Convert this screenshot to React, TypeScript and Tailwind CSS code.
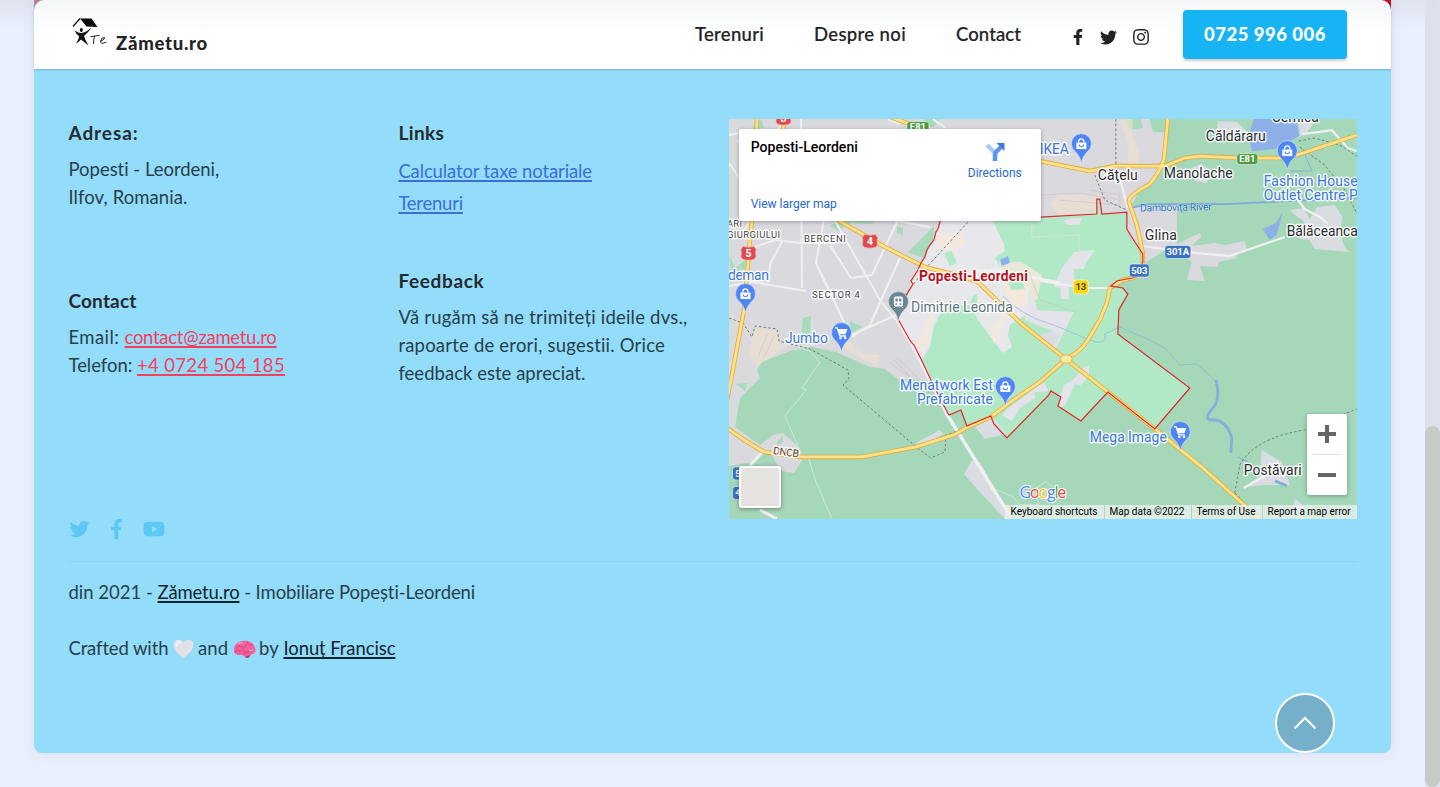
import { useLayoutEffect, useRef } from "react";
import type { ReactNode } from "react";
import { FaFacebookF, FaTwitter, FaInstagram, FaYoutube } from "react-icons/fa";

/* A run of text whose tracking is computed so that it fills `w` pixels. */
function Run({ w, className = "", children }: { w: number; className?: string; children: string }) {
  const ref = useRef<HTMLSpanElement>(null);
  useLayoutEffect(() => {
    const el = ref.current;
    if (!el) return;
    el.style.letterSpacing = "0px";
    const natural = el.getBoundingClientRect().width;
    el.style.letterSpacing = `${(w - natural) / children.length}px`;
  }, [w, children]);
  return (
    <span ref={ref} className={`inline-block whitespace-pre ${className}`}>
      {children}
    </span>
  );
}

type LabelProps = { x: number; y: number; w: number; size?: number; fill?: string; bold?: boolean; halo?: number; children: string };
function Label({ x, y, w, size = 14, fill = "#2c2c2f", bold = false, halo = 3, children }: LabelProps) {
  return (
    <text
      x={x}
      y={y}
      textLength={w}
      fontSize={size}
      fontWeight={bold ? 700 : 400}
      fill={fill}
      stroke="#fff"
      strokeOpacity={0.85}
      strokeWidth={halo}
      strokeLinejoin="round"
      paintOrder="stroke"
    >
      {children}
    </text>
  );
}

function Pin({ x, y, kind }: { x: number; y: number; kind: "bag" | "cart" | "train" }) {
  return (
    <g transform={`translate(${x} ${y})`}>
      <path
        d="M0 18.5C-1.5 13-3.500 10-6.500 7.200A10 10 0 1 1 6.500 7.200C3.500 10 1.500 13 0 18.500Z"
        fill={kind === "train" ? "#6b8791" : "#4f86f3"}
        stroke="#dfe8f5"
        strokeWidth={0.6}
      />
      {kind === "bag" && (
        <g>
          <path d="M-5-1.500H5V5H-5Z" fill="#fff" />
          <path d="M-2.600-1.500V-2.500A2.600 2.600 0 0 1 2.600-2.500V-1.500" fill="none" stroke="#fff" strokeWidth={1.300} />
          <path d="M-2.200 0.500A2.200 2.200 0 0 0 2.200 0.500" fill="none" stroke="#4f86f3" strokeWidth={1.100} />
        </g>
      )}
      {kind === "cart" && (
        <g>
          <path d="M-3.700-4H6L4 1.300H-2Z" fill="#fff" />
          <path d="M-6.500-5.200H-4.300L-1.500 3H4.500" fill="none" stroke="#fff" strokeWidth={1.300} />
          <circle cx={-1} cy={5} r={1.200} fill="#fff" />
          <circle cx={3.800} cy={5} r={1.200} fill="#fff" />
        </g>
      )}
      {kind === "train" && (
        <g>
          <rect x={-4.500} y={-5.500} width={9} height={10} rx={1.800} fill="#fff" />
          <path d="M-3-3.500H-0.600V-0.500H-3ZM0.600-3.500H3V-0.500H0.600ZM-3 1.200H-1.200V2.800H-3ZM1.200 1.200H3V2.800H1.200Z" fill="#6b8791" />
          <path d="M-3 4.500L-4.500 6M3 4.500L4.500 6" stroke="#fff" />
        </g>
      )}
    </g>
  );
}

function Shield({ x, y, w, h = 13, fill, color = "#fff", text }: { x: number; y: number; w: number; h?: number; fill: string; color?: string; text: string }) {
  return (
    <g>
      <rect x={x - w / 2} y={y - h / 2} width={w} height={h} rx={3} fill={fill} stroke="#fff" strokeOpacity={0.7} strokeWidth={0.8} />
      <text x={x} y={y + 3.400} fontSize={9.500} fontWeight={700} textAnchor="middle" fill={color}>
        {text}
      </text>
    </g>
  );
}

/* National road marker: a red shield with notched upper corners. */
function RoadShield({ x, y, text }: { x: number; y: number; text: string }) {
  return (
    <g transform={`translate(${x} ${y})`}>
      <path d="M-5.500-6.500Q0-5 5.500-6.500L7.500-3.500Q6.500 0 7.500 3Q7.500 7 0 7Q-7.500 7-7.500 3Q-6.500 0-7.500-3.500Z" fill="#e2484c" stroke="#e9a9ae" strokeWidth={0.6} />
      <text y={4} fontSize={10.500} fontWeight={700} textAnchor="middle" fill="#fff">
        {text}
      </text>
    </g>
  );
}

const BORDER =
  "M941 219L938 229L936 232L934 240L930 245L927 250L925 257L921 263L918 270L911 281L913 284L906 296L898 319L911 342L914 345L921 359L932 382L942 402L949 415L961 410L967 426L991 416L994 424L1007 438L1049 395L1051 391L1061 397L1058 406L1081 421L1108 392L1155 429L1190 388L1118 334L1119 310L1128 294L1123 288L1111 286L1117 281L1137 277L1143 262L1143 254L1135 242L1127 229L1127 212L1102 214L1100 199L1097 199L1097 214L1040 217Z";

const HIGHWAYS = [
  "M757 119L753 210L750 240L744 310L731 380L727 400",
  "M784 119L783 132",
  "M836 219L885 247L925 267L960 276L978 282L1009 312L1023 325L1066 359L1108 392L1155 429L1203 468L1260 519",
  "M727 428L744 440L764 452L800 457H862L916 447L954 435L968 427L991 417L1012 401L1040 382L1066 359Q1081 352 1088 340L1100 320L1107 303L1110 288L1123 280L1137 277",
  "M1143 270V254L1137 225L1129 202Q1128 196 1150 184Q1160 172 1164 160L1168 119",
  "M1030 159L1075 168L1090 171L1115 166H1165L1185 158L1200 156L1240 158H1285L1300 154L1357 135",
  "M885 115L910 124",
];

function MapDrawing() {
  return (
    <svg className="block h-full w-full" viewBox="729 119 628 400" fontFamily="Roboto, sans-serif">
      <rect x={729} y={119} width={628} height={400} fill="#a5d7b9" />
      <path
        d="M729 119H1150L1153 132H1165L1163 165L1155 180L1140 190L1131 206H1177V244L1200 233L1202 236L1192 246L1215 243L1225 245L1245 241L1247 250L1236 254L1237 258L1219 262L1218 267L1200 266L1205 281L1187 280L1192 262L1182 255L1165 250L1150 260L1143 264L1110 280L950 411L925 380L898 379L885 369L870 367L836 352L812 347L790 351L762 362L757 370L760 378L740 398L735 427L760 445L773 435L783 433L800 448L802 460L794 473L781 471L770 452H762L752 462L729 466Z"
        fill="#dadade"
      />
      <g fill="#a9dabc">
        <path d="M755 119L762 121L764 128L753 129ZM925 119H940L934 127H921ZM1125 119H1141L1143 128L1128 130ZM908 252L934 226V247L925 259ZM803 318L811 316L810 342L800 346ZM850 321L863 327L849 334ZM729 256L736 268L746 259V269L731 272ZM830 226L842 219H875L872 224L850 223L838 231ZM736 384L747 383L745 391Z" />
        <path d="M777 442L783 436V441L777 448ZM897 226L903 228V235L897 233Z" />
      </g>
      <path d="M749 353L754 328L778 330V340L792 343L763 362L757 365ZM838 346L845 337L865 355H880L876 365ZM1050 203L1060 195H1100L1102 209L1080 226L1065 225ZM1120 119H1133L1132 135L1140 152L1138 168L1128 164L1129 145Z" fill="#ecdfce" opacity={0.7} />

      <path d={BORDER} fill="#b1e9c6" />
      <path
        d="M941 219H992L1004 244L1005 251L995 258L1003 272L1030 288L1033 310L1010 325L1008 335L1012 347L1003 353L978 320L970 305L945 306L934 326L930 347L922 360L898 319L912 282L931 245Z"
        fill="#e8e7ec"
      />
      <path d="M999 262H1022L1042 275L1038 299L1010 310L994 345L990 328L1010 305L1003 286ZM934 233L962 235L967 245L952 250L938 249Z M936 307L930 337L923 352L915 344Z" fill="#f5e9d9" opacity={0.8} />
      <path d="M1062 268L1074 252L1095 250L1086 263L1084 269H1074L1075 285H1069V299H1061V288L1054 287ZM1030 288L1038 310L1074 312L1055 350L1044 344L1053 331L1025 320ZM1084 367L1089 366V375L1081 385L1075 384L1066 404L1060 408L1058 405L1064 385L1073 380ZM1010 407L1044 382L1049 391L1035 392V398L1020 408L1012 421L1002 415ZM1063 221L1072 218H1082L1079 225H1068Z" fill="#e4e3e9" />
      <path d="M944 253L952 251L957 263L950 266ZM973 296L978 293L977 304L970 303ZM1008 281L1022 279L1025 289L1011 290Z" fill="#b1e9c6" />
      <path d="M1000 260L1008 256L1010 263L1002 266Z" fill="#8eb3ec" />

      <g fill="#d9dce0">
        <path d="M1290 210L1304 208L1310 219L1317 207L1335 205L1343 217L1340 233L1345 247L1350 252L1315 249L1310 240L1300 239L1305 222L1294 214Z" />
        <path d="M1244 487L1260 476L1262 450L1282 462L1290 485L1265 485ZM1295 499L1302 504L1306 511H1293ZM1297 119H1317L1305 135L1291 140L1300 131ZM1218 121L1237 122L1249 133L1240 143L1217 130ZM1190 169L1201 164L1213 171L1207 183L1195 181Z" />
        <path d="M975 427L992 416L1007 434L985 439ZM964 474L972 460L980 462L1011 519H1005L978 490ZM916 443L940 430L944 434L920 447Z" />
        <path d="M1040 335L1053 331L1062 334L1052 348L1041 344Z" />
      </g>
      <path d="M1254 119H1296L1300 136L1275 149L1252 151L1249 134ZM1263 229L1276 223L1283 212L1277 235L1270 240Z" fill="#8eb0e8" />
      <g fill="none" stroke="#86b0dc">
        <path d="M1129 208L1150 204L1225 204L1290 201L1357 198" strokeWidth={1.800} stroke="#7ba8dd" />
        <path d="M1003 296Q1023 316 1048 323Q1062 328 1085 338T1105 334L1120 327L1145 338L1165 348L1180 365L1197 364L1215 380" opacity={0.65} />
        <path d="M1216 380Q1221 397 1214 407Q1204 418 1210 420Q1226 418 1232 438L1231 453" strokeWidth={2.800} />
        <path d="M1275 481L1287 486" strokeWidth={3} />
        <path d="M1303 149L1312 171H1290M1238 457L1250 463" />
      </g>

      <g fill="none" stroke="#f0f0f3" strokeWidth={2}>
        <path d="M801 119L802 288M729 286L752 282L806 291M752 248L775 240L800 243H835M783 240L770 264L769 282M824 219L816 263L845 324M834 219L880 300L896 320M887 219L930 227M830 245L851 278L872 275L898 220M900 258L870 325L852 337M852 335L896 315M729 163L741 180L760 162L737 140M755 215L740 235M767 140L788 119M888 119L900 124M729 135L752 130M933 119L946 128" />
        <path d="M897 319L915 350L948 416L1012 519" strokeWidth={3.500} />
        <path d="M1118 171L1128 208M1143 246L1185 252L1230 256L1285 237M1295 196L1305 209L1320 217L1328 223M1040 281L1085 288H1111M1303 134L1332 130L1348 148L1357 151M1244 488L1262 478L1278 462" strokeWidth={2.200} />
        <path d="M750 465L765 450M760 510L777 519M974 271L1000 270L1030 277L1060 283" strokeWidth={3} />
      </g>
      <g fill="none" stroke="#cfe9d9">
        <path d="M807 348L820 362L802 388L806 390L785 416L798 446M809 459L816 482L832 519M812 320V345L799 347L808 351M1032 223V237L1079 235V250L1095 253M996 490L1012 496L1020 505H1040L1033 490L1046 482L1060 491" />
      </g>
      <g fill="none" stroke="#cbbcc5" opacity={0.6}>
        <path d="M889 362L911 378M893 359L915 381M897 358L918 378M759 355L767 334M764 358L774 336M1029 272L1040 300L1075 312M1090 190L1120 195V205L1060 200M1040 195L1080 193L1120 200" />
      </g>
      <g fill="none" stroke="#6f7b79" strokeDasharray="2.5 2.200">
        <path d="M729 318L743 323L752 337L755 326L777 329L779 341L810 349L848 370L849 379L843 385L920 450L931 458L945 452L946 441L942 437L968 427M905 295L926 268L968 222M1116 119V171L1117 180M1095 175L1105 200L1127 210M1299 141L1315 138L1340 145L1357 156M1300 147L1325 165L1345 190L1357 213M1235 493L1240 465Q1255 438 1305 430L1357 409M1235 493L1250 508" />
      </g>

      {HIGHWAYS.map((d) => (
        <path key={d} d={d} fill="none" stroke="#e3ac3e" strokeWidth={4.500} strokeLinejoin="round" />
      ))}
      {HIGHWAYS.map((d) => (
        <path key={d} d={d} fill="none" stroke="#fce28b" strokeWidth={2.800} strokeLinejoin="round" />
      ))}
      <rect x={1061} y={355} width={11} height={8} rx={3} fill="#fce9a6" stroke="#e8b64c" />
      <path d={BORDER} fill="none" stroke="#e0262c" strokeWidth={1.200} />

      <RoadShield x={783.500} y={118} text="3" />
      <RoadShield x={748.500} y={253} text="5" />
      <RoadShield x={870} y={241} text="4" />
      <Shield x={918} y={126.500} w={22} h={10} fill="#4f9d42" text="E81" />
      <Shield x={1247.500} y={159} w={21} h={11} fill="#4f9d42" text="E81" />
      <Shield x={1178} y={252} w={26} fill="#3a72c4" text="301A" />
      <Shield x={1139.500} y={270.500} w={20} fill="#3a72c4" text="503" />
      <Shield x={1081} y={287} w={15} h={14} fill="#f9d50f" color="#57451b" text="13" />
      <Shield x={738} y={473.500} w={11} fill="#3a72c4" text="5" />
      <Shield x={738} y={493} w={11} fill="#3a72c4" text="4" />

      <Pin x={1081.500} y={144} kind="bag" />
      <Pin x={1287.500} y={151} kind="bag" />
      <Pin x={745.500} y={294} kind="bag" />
      <Pin x={841.500} y={333} kind="cart" />
      <Pin x={1005.500} y={387} kind="bag" />
      <Pin x={1180.500} y={432} kind="cart" />
      <Pin x={898.500} y={302} kind="train" />

      <Label x={1272} y={121.500} w={47}>Cernica</Label>
      <Label x={1206} y={141} w={60}>Căldăraru</Label>
      <Label x={1098} y={180} w={40}>Căţelu</Label>
      <Label x={1164} y={178} w={69}>Manolache</Label>
      <Label x={1145} y={240} w={32}>Glina</Label>
      <Label x={1287} y={236} w={71}>Bălăceanca</Label>
      <Label x={1244} y={475} w={58}>Postăvari</Label>
      <Label x={1040} y={154} w={29} fill="#3c76dc">IKEA</Label>
      <Label x={1264} y={185.500} w={94} fill="#3c76dc">Fashion House</Label>
      <Label x={1264} y={199.500} w={94} fill="#3c76dc">Outlet Centre P</Label>
      <Label x={728} y={280} w={41} fill="#3c76dc">deman</Label>
      <Label x={785} y={343} w={43} fill="#3c76dc">Jumbo</Label>
      <Label x={900} y={390.500} w={93} fill="#3c76dc">Menatwork Est</Label>
      <Label x={917} y={404.500} w={76} fill="#3c76dc">Prefabricate</Label>
      <Label x={1090} y={442} w={77} fill="#3c76dc">Mega Image</Label>
      <Label x={911} y={312} w={102} fill="#60757e">Dimitrie Leonida</Label>
      <Label x={919} y={281} w={109} fill="#b80f1b" bold>Popesti-Leordeni</Label>
      <Label x={727} y={226.500} w={15} size={9.500} fill="#45454b">ARI</Label>
      <Label x={727} y={238} w={53} size={9.500} fill="#45454b">GIURGIULUI</Label>
      <Label x={804} y={241.500} w={42} size={9.500} fill="#45454b">BERCENI</Label>
      <Label x={812} y={297.500} w={48} size={9.500} fill="#45454b">SECTOR 4</Label>
      <g transform="rotate(-1 1140 208)">
        <Label x={1140} y={211.500} w={72} size={10.500} fill="#2f73bd" halo={0.5}>Dâmboviţa River</Label>
      </g>
      <g transform="rotate(8 773 452)">
        <Label x={773} y={454} w={26} size={10.500} fill="#58451d">DNCB</Label>
      </g>
      <text x={1019.500} y={498} fontSize={16} textLength={47} fontFamily="'Open Sans', sans-serif" stroke="#fff" strokeWidth={2} paintOrder="stroke">
        <tspan fill="#4285f4">G</tspan>
        <tspan fill="#ea4335">o</tspan>
        <tspan fill="#fbbc05">o</tspan>
        <tspan fill="#4285f4">g</tspan>
        <tspan fill="#34a853">l</tspan>
        <tspan fill="#ea4335">e</tspan>
      </text>
    </svg>
  );
}

function MapWidget() {
  return (
    <div className="relative h-[400px] w-[628px] overflow-hidden font-['Roboto',sans-serif]">
      <MapDrawing />
      <div className="absolute left-[10px] top-[10px] flex h-[92px] w-[302px] justify-between rounded-[2px] bg-white pl-3 pr-[19px] shadow-[0_1px_4px_rgba(0,0,0,0.3)]">
        <div className="flex flex-col justify-between pb-[8px] pt-[9px]">
          <div className="text-[14px] leading-[18px] font-medium text-black">
            <Run w={107}>Popesti-Leordeni</Run>
          </div>
          <div className="text-[12px] leading-[18px] text-[#2567cf]">
            <Run w={86}>View larger map</Run>
          </div>
        </div>
        <div className="flex flex-col items-center pt-[13px] text-[12px] text-[#2567cf]">
          <svg className="h-[20px] w-[22px]" viewBox="0 0 22 20">
            <path d="M3 3L11 11" stroke="#a9c8f5" strokeWidth={4.500} />
            <path d="M11 19V13Q11 11 12.500 9.500L17 5" fill="none" stroke="#5b94ee" strokeWidth={4.500} />
            <path d="M12.500 1H20.500V9Z" fill="#3f78d8" />
          </svg>
          <div className="pt-[2px] leading-[18px]">
            <Run w={54}>Directions</Run>
          </div>
        </div>
      </div>
      <div className="absolute bottom-[11px] left-[10px] h-[42px] w-[42px] rounded-[3px] border-2 border-white bg-[#e5e3df] shadow-[0_1px_4px_rgba(0,0,0,0.4)]" />
      <div className="absolute right-[10px] top-[295px] flex h-[81px] w-10 flex-col items-center rounded-[2px] bg-white shadow-[0_1px_4px_rgba(0,0,0,0.3)]">
        <svg className="h-[81px] w-10" viewBox="0 0 40 81">
          <path d="M11 20H29M20 11V29M11 61H29" stroke="#666" strokeWidth={4} />
          <path d="M5 40.500H35" stroke="#e2e2e2" />
        </svg>
      </div>
      <div className="absolute bottom-0 right-0 flex h-[14px] items-center bg-[#eaf1ec]/80 pr-[6px] text-[10px] leading-[14px] text-black">
        <span className="pl-[6px] pr-[6px]"><Run w={87}>Keyboard shortcuts</Run></span>
        <span className="border-l border-[#bccfc4] pl-[5px] pr-[6px]"><Run w={75}>Map data ©2022</Run></span>
        <span className="border-l border-[#bccfc4] pl-[5px] pr-[6px]"><Run w={59}>Terms of Use</Run></span>
        <span className="border-l border-[#bccfc4] pl-[5px]"><Run w={83}>Report a map error</Run></span>
      </div>
    </div>
  );
}

function Logo() {
  return (
    <svg className="h-[32px] w-[37px]" viewBox="0 0 37 32">
      <path d="M9 2.500H20.500L26.500 11L15.500 10.500Z" fill="#0b0b0b" />
      <path d="M9 2.500L2 10.500" stroke="#111" strokeWidth={1.400} />
      <ellipse cx={10.300} cy={14} rx={1.500} ry={1.900} fill="#111" />
      <path d="M3.500 14.500Q8 17.500 11 17Q15.500 16 20.500 11.500Q17 17 13 20Q14 24 17.500 29.500Q13 26 10 23.500Q8 26 5 27.500Q8 23 8 20Q5 18 3.500 14.500Z" fill="#111" />
      <g fill="none" stroke="#222">
        <path d="M19.500 20.700L28.500 19.300M23.500 20Q22.500 24 22.500 28" />
        <path d="M29.500 25.500Q34.500 23 33.500 21.500Q30.500 21 29.500 25Q29 29 35.500 26" />
      </g>
    </svg>
  );
}

function Heart() {
  return (
    <svg className="h-[20px] w-[21px]" viewBox="0 0 21 20">
      <path d="M10.500 19C5 15 .5 10.500.5 5.500C.5 1 7-1.500 10.500 3.500C14-1.500 20.500 1 20.500 5.500C20.500 10.500 16 15 10.500 19Z" fill="#dfe1e4" />
      <path d="M4 8C2 4 6 2 8 4" fill="none" stroke="#f2f2f4" strokeWidth={2} />
    </svg>
  );
}

function Brain() {
  return (
    <svg className="h-[19px] w-[23px]" viewBox="0 0 23 19">
      <path d="M1 11C0 6 4 1 10 1C17 0 22 4 22.500 10C23 13 20 14 18 14.500C18 17 15 18.500 13 18C11 15.500 10 14.500 7 15C3 15.500 1 13 1 11Z" fill="#f0609a" />
      <path d="M3 9Q6 4 9 7T13 4M6 12Q9 8 12 11T19 8M10 14Q13 12 16 13M14 2Q15 6 19 5M2 12Q4 10 6 10" fill="none" stroke="#d5447f" />
      <path d="M5 4Q8 2 10 3M16 10Q19 11 20 9" fill="none" stroke="#fb9fc4" strokeWidth={1.200} />
      <path d="M12 17L17 15L15 18Z" fill="#a93666" />
    </svg>
  );
}

function Heading({ w, children }: { w: number; children: string }) {
  return (
    <h2 className="text-[19px] leading-7 font-bold text-[#232b31]">
      <Run w={w}>{children}</Run>
    </h2>
  );
}

function Header() {
  return (
    <header className="relative z-10 flex h-[69px] items-start rounded-t-[10px] bg-linear-to-b from-[#f5f7f8] via-white via-50% to-white pl-[37px] text-[#232323] shadow-[0_1px_2px_rgba(0,0,0,0.2)]">
      <a className="flex h-full w-[624px] pt-4">
        <Logo />
        <span className="pl-[8px] pt-[13px] text-[18.5px] leading-7 font-black">
          <Run w={92}>Zămetu.ro</Run>
        </span>
      </a>
      <nav className="flex w-[377px] gap-[50px] pt-[20px] text-[18.5px] leading-7 font-medium [-webkit-text-stroke:0.2px_#232323]">
        <Run w={69}>Terenuri</Run>
        <Run w={92}>Despre noi</Run>
        <Run w={65}>Contact</Run>
      </nav>
      <div className="flex w-[111px] items-center gap-[15px] pt-[28px]">
        <FaFacebookF className="h-[16px] w-[12px]" />
        <FaTwitter className="ml-[1px] h-[17px] w-[17px]" />
        <FaInstagram className="h-[18px] w-[18px]" />
      </div>
      <a className="mt-[10px] flex h-[49px] w-[164px] items-center justify-center rounded-[4px] bg-[#16b4f2] text-[18.5px] font-black text-white shadow-[0_2px_3px_rgba(0,0,0,0.2)]">
        <Run w={122}>0725 996 006</Run>
      </a>
    </header>
  );
}

function Link({ className, children }: { className: string; children: ReactNode }) {
  return (
    <a className={`block h-7 underline decoration-2 underline-offset-[2px] [text-decoration-skip-ink:none] *:[text-decoration:inherit] ${className}`}>
      {children}
    </a>
  );
}

export default function App() {
  return (
    <div className="flex h-[787px] w-[1440px] justify-between overflow-hidden bg-[#e9effc] bg-linear-to-b from-[#dee3ef] to-[#e9effc] to-[28px] pl-[34px] font-['Lato',sans-serif]">
      <main className="h-[753px] w-[1357px] rounded-b-lg bg-[#93ddfa] bg-linear-to-r from-[#b37f95] to-[#c01025] bg-[length:100%_20px] bg-no-repeat shadow-[0_0_12px_rgba(80,100,150,0.12)]">
        <Header />
        <footer className="px-[34.5px] pt-[50px] text-[18.5px] leading-7 text-[#27404c]">
          <div className="flex h-[400px]">
            <section className="w-[330px]">
              <Heading w={70}>Adresa:</Heading>
              <div className="h-[132px] pt-[8px]">
                <div><Run w={151}>Popesti - Leordeni,</Run></div>
                <div><Run w={119}>Ilfov, Romania.</Run></div>
              </div>
              <div className="pt-[8px]">
                <Heading w={68}>Contact</Heading>
              </div>
              <div className="pt-[8px]">
                <div className="flex h-7">
                  <Run w={56}>{"Email: "}</Run>
                  <Link className="text-[#f5405e]"><Run w={152}>contact@zametu.ro</Run></Link>
                </div>
                <div className="flex h-7">
                  <Run w={68.500}>{"Telefon: "}</Run>
                  <Link className="text-[#f5405e]"><Run w={148}>+4 0724 504 185</Run></Link>
                </div>
              </div>
            </section>
            <section className="w-[330.5px]">
              <Heading w={46}>Links</Heading>
              <div className="flex h-[120px] flex-col items-start gap-[4px] pt-[10px] text-[#3a6fd8]">
                <Link className=""><Run w={193.500}>Calculator taxe notariale</Run></Link>
                <Link className=""><Run w={64.500}>Terenuri</Run></Link>
              </div>
              <Heading w={86}>Feedback</Heading>
              <div className="pt-[8px]">
                <div><Run w={289}>Vă rugăm să ne trimiteți ideile dvs.,</Run></div>
                <div><Run w={267}>rapoarte de erori, sugestii. Orice</Run></div>
                <div><Run w={187}>feedback este apreciat.</Run></div>
              </div>
            </section>
            <MapWidget />
          </div>
          <div className="flex h-[42px] items-start gap-[20px] text-[#5cc8f5]">
            <FaTwitter className="h-[20px] w-[21px]" />
            <FaFacebookF className="h-[20px] w-[13px]" />
            <FaYoutube className="h-[20px] w-[22px]" />
          </div>
          <div className="border-t border-[#8bd3f0] pt-[16px]">
            <div className="flex h-[56px]">
              <Run w={89}>{"din 2021 - "}</Run>
              <Link className="text-[#14242e]"><Run w={82}>Zămetu.ro</Run></Link>
              <Run w={236}>{" - Imobiliare Popești-Leordeni"}</Run>
            </div>
            <div className="flex h-[28px]">
              <Run w={104}>{"Crafted with "}</Run>
              <span className="w-[25px] pt-[5px]"><Heart /></span>
              <Run w={35}>{"and "}</Run>
              <span className="w-[26px] pt-[6px]"><Brain /></span>
              <Run w={24.500}>{"by "}</Run>
              <Link className="text-[#14242e]"><Run w={112}>Ionuț Francisc</Run></Link>
            </div>
          </div>
        </footer>
      </main>
      <button aria-label="Sus" className="fixed left-[1275px] top-[693px] flex h-[60px] w-[60px] items-center justify-center rounded-full border-2 border-white bg-[#76afc9]">
        <svg className="h-[14px] w-[24px]" viewBox="0 0 24 14">
          <path d="M1.500 12.500L12 2L22.500 12.500" fill="none" stroke="#fff" strokeWidth={2} />
        </svg>
      </button>
      <aside className="flex h-full w-[15px] flex-col justify-end rounded-t-lg bg-[#dce1ed]">
        <div className="h-[361px] rounded-full bg-[#c8cac5]" />
      </aside>
    </div>
  );
}
